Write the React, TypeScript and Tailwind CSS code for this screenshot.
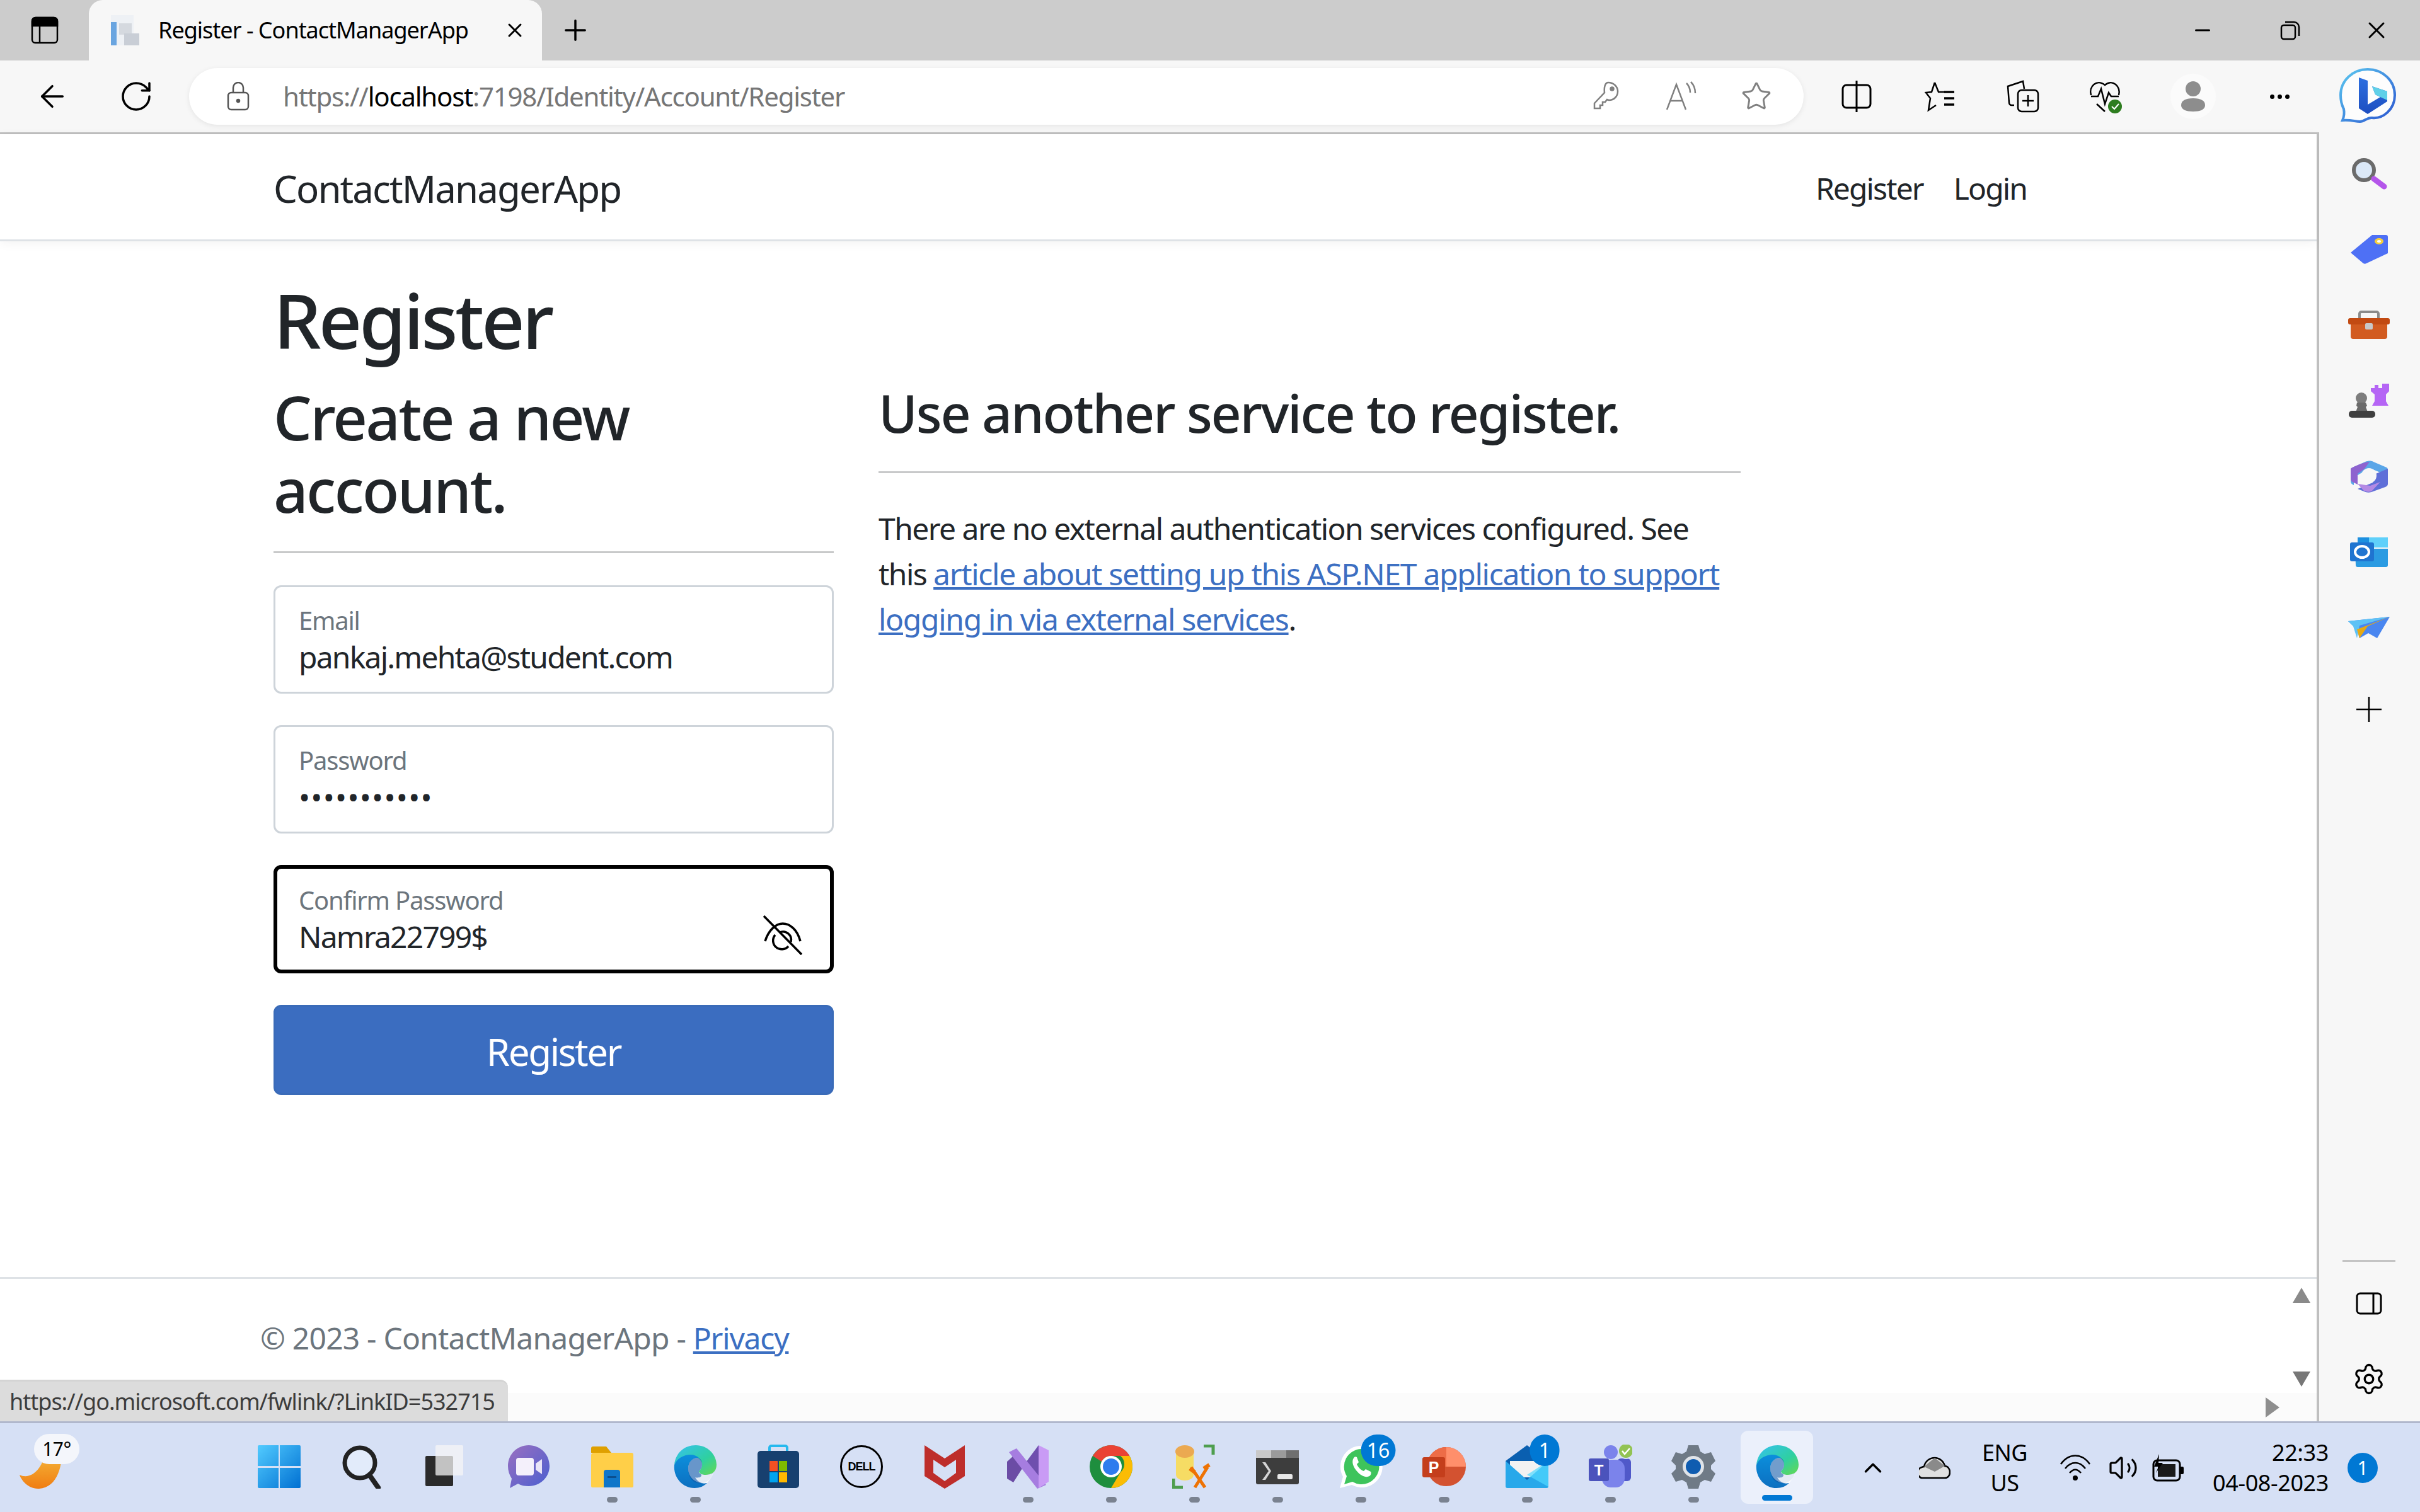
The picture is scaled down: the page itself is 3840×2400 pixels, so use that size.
import React from "react";
import { ArrowLeft, RotateCw, X, Plus, Minus, Star, Settings, ChevronUp, Volume2 } from "lucide-react";

const EdgeLogo = ({ size = 70 }: { size?: number }) => (
  <svg width={size} height={size} viewBox="0 0 70 70">
    <defs>
      <linearGradient id="edgeA" x1="0" y1="0" x2="1" y2="1">
        <stop offset="0" stopColor="#35c1f1" />
        <stop offset="0.6" stopColor="#2fd0a0" />
        <stop offset="1" stopColor="#66d94f" />
      </linearGradient>
      <linearGradient id="edgeB" x1="0" y1="0" x2="0" y2="1">
        <stop offset="0" stopColor="#0c8fdc" />
        <stop offset="1" stopColor="#0c6fc0" />
      </linearGradient>
    </defs>
    <path d="M2 32C4 13 18 1 36 1c19 0 33 15 33 31 0 11-8 16-17 16-6 0-11-2-11-5 0-2 5-4 5-11 0-8-8-14-18-14C16 18 6 23 2 32z" fill="url(#edgeA)" />
    <path d="M2 32c4-10 15-16 26-16 5 0 10 2 13 5-8-1-17 5-17 17 0 14 13 26 30 23-5 5-12 8-20 8C15 69 0 52 2 32z" fill="url(#edgeB)" />
    <path d="M24 38c0-12 9-18 17-17 4 3 5 6 5 11 0 7-5 9-5 11 0 3 5 5 11 5 5 0 9-1 11-3-2 9-8 14-15 16C31 64 24 52 24 38z" fill="#0f5aa6" opacity="0.55" />
    <path d="M41 43c0 3 5 5 11 5 4 0 9-1 12-3-2 6-6 11-10 16-9 2-16-3-19-9 2 1 9 1 10-3 0-3-3-4-4-6z" fill="#ffffff" opacity="0.8" />
  </svg>
);

const WinLogo = () => (
  <svg width="70" height="70" viewBox="0 0 70 70">
    <defs>
      <linearGradient id="winG" x1="0" y1="0" x2="1" y2="1">
        <stop offset="0" stopColor="#52cbff" />
        <stop offset="1" stopColor="#0070d2" />
      </linearGradient>
    </defs>
    <path d="M1 3a2 2 0 012-2h31v33H1zM36 1h31a2 2 0 012 2v31H36zM1 37h33v32H3a2 2 0 01-2-2zM36 37h33v30a2 2 0 01-2 2H36z" fill="url(#winG)" />
  </svg>
);

const SearchGlyph = () => (
  <svg width="70" height="70" viewBox="0 0 70 70" fill="none">
    <circle cx="31" cy="29" r="24" fill="#e2ebfa" stroke="#222" strokeWidth="7" />
    <path d="M46 48l14 20" stroke="#222" strokeWidth="8" strokeLinecap="round" />
  </svg>
);

const TaskView = () => (
  <svg width="70" height="70" viewBox="0 0 70 70">
    <rect x="3" y="18" width="44" height="48" rx="2" fill="#2b2b2b" />
    <rect x="19" y="1" width="44" height="48" rx="2" fill="#f6f6f6" opacity="0.75" />
  </svg>
);

const Meet = () => (
  <svg width="70" height="70" viewBox="0 0 70 70">
    <defs>
      <linearGradient id="meetG" x1="0" y1="0" x2="1" y2="1">
        <stop offset="0" stopColor="#9a6fc0" />
        <stop offset="1" stopColor="#4a5fd0" />
      </linearGradient>
    </defs>
    <path d="M35 1c19 0 33 15 33 33S53 66 35 66c-6 0-12-1-17-4L5 69l3-15C4 48 2 41 2 34 2 16 16 1 35 1z" fill="url(#meetG)" />
    <rect x="15" y="21" width="28" height="28" rx="4" fill="#f4f0fb" />
    <path d="M46 30l10-7v24l-10-7z" fill="#e8e4f7" />
  </svg>
);

const Folder = () => (
  <svg width="70" height="70" viewBox="0 0 70 70">
    <path d="M2 6a3 3 0 013-3h21l8 10H2z" fill="#dfa000" />
    <path d="M2 17a4 4 0 014-4h60a3 3 0 013 3v50a2 2 0 01-2 2H4a2 2 0 01-2-2z" fill="#ffcf48" />
    <path d="M22 44a4 4 0 014-4h18a4 4 0 014 4v24H22z" fill="#0f76c9" />
    <rect x="28" y="50" width="14" height="3" fill="#0a4f8f" />
  </svg>
);

const Store = () => (
  <svg width="70" height="70" viewBox="0 0 70 70">
    <path d="M21 14V5a3 3 0 013-3h22a3 3 0 013 3v9" fill="none" stroke="#25b9ee" strokeWidth="4" />
    <rect x="2" y="10" width="66" height="59" rx="5" fill="#17406f" />
    <rect x="21" y="26" width="13" height="16" fill="#f25022" />
    <rect x="36" y="26" width="13" height="16" fill="#7fba00" />
    <rect x="21" y="44" width="13" height="16" fill="#00a4ef" />
    <rect x="36" y="44" width="13" height="16" fill="#ffb900" />
  </svg>
);

const Dell = () => (
  <svg width="70" height="70" viewBox="0 0 70 70" fill="none">
    <circle cx="35" cy="35" r="32.5" stroke="#000" strokeWidth="3" />
    <text x="35" y="41" textAnchor="middle" fontSize="18" fontWeight="700" fontFamily="Liberation Sans, sans-serif" fill="#000" letterSpacing="-1">DELL</text>
  </svg>
);

const McAfee = () => (
  <svg width="70" height="70" viewBox="0 0 70 70">
    <path d="M3 1l32 21L67 1v49L35 70 3 50z" fill="#be2e2b" />
    <path d="M17 24l18 12 18-12v21L35 58 17 45z" fill="#d6e0f5" />
  </svg>
);

const VisualStudio = () => (
  <svg width="70" height="70" viewBox="0 0 70 70">
    <path d="M2 27l10-9 14 20-14 22-10-6z" fill="#6b4ca5" />
    <path d="M52 1L26 36 52 69z" fill="#6f4fae" />
    <path d="M5 12l12-6 47 58-14 6z" fill="#a67de0" />
    <path d="M52 1l16 8v50l-16 10z" fill="#c99bf5" />
  </svg>
);

const Chrome = () => (
  <svg width="70" height="70" viewBox="0 0 70 70">
    <circle cx="35" cy="35" r="34" fill="#1e8e3e" />
    <path d="M35 1a34 34 0 0129.4 17H35a17 17 0 00-15 9L6 18A34 34 0 0135 1z" fill="#ea4335" />
    <path d="M64.4 18A34 34 0 0135 69l15-25a17 17 0 000-26z" fill="#fbbc04" />
    <circle cx="35" cy="35" r="17" fill="#fff" />
    <circle cx="35" cy="35" r="13" fill="#2f7cee" />
  </svg>
);

const DbTools = () => (
  <svg width="70" height="70" viewBox="0 0 70 70" fill="none">
    <path d="M6 12v36c0 6 8 9 14 9s14-3 14-9V12z" fill="#f6dc64" />
    <ellipse cx="20" cy="11" rx="15" ry="10" fill="#eba951" />
    <path d="M50 2h15v14M2 54v14h15" stroke="#4e9e4e" strokeWidth="5" />
    <path d="M30 36l22 32M56 36L36 68" stroke="#ee7203" strokeWidth="5" />
    <path d="M28 38l8 6M50 38l9-6" stroke="#ee7203" strokeWidth="6" />
  </svg>
);

const TerminalIcon = () => (
  <svg width="70" height="70" viewBox="0 0 70 70">
    <rect x="1" y="9" width="68" height="54" rx="3" fill="#3d3d3d" />
    <rect x="1" y="9" width="24" height="12" fill="#c9c9c9" />
    <rect x="25" y="9" width="24" height="12" fill="#9b9b9b" />
    <rect x="49" y="9" width="20" height="12" fill="#6f6f6f" />
    <path d="M11 28l10 14-10 14 5 0 9-14-9-14z" fill="#d5d5d5" />
    <rect x="35" y="47" width="24" height="8" rx="2" fill="#e8e8e8" />
  </svg>
);

const WhatsApp = () => (
  <svg width="70" height="70" viewBox="0 0 70 70">
    <path d="M36 2a33 33 0 11-15 62L2 69l5-18A33 33 0 0136 2z" fill="#fff" />
    <path d="M36 7a28 28 0 11-14 52L9 63l4-13A28 28 0 0136 7z" fill="#3ec45c" />
    <path d="M25 20c-4 4-4 12 3 21s16 12 21 9c3-2 3-6 2-7l-8-4-3 3c-4-1-10-7-11-11l3-3-3-8c-1-1-3-1-4 0z" fill="#fff" />
  </svg>
);

const PowerPoint = () => (
  <svg width="70" height="70" viewBox="0 0 70 70">
    <circle cx="39" cy="35" r="31" fill="#d35230" />
    <path d="M39 4a31 31 0 0131 31H39z" fill="#ff8f6b" />
    <path d="M39 4v31H8A31 31 0 0139 4z" fill="#ed6c47" />
    <rect x="1" y="20" width="36" height="32" rx="3" fill="#c43e1c" />
    <text x="19" y="45" textAnchor="middle" fontSize="25" fontWeight="700" fontFamily="Liberation Sans, sans-serif" fill="#fff">P</text>
  </svg>
);

const Mail = () => (
  <svg width="70" height="70" viewBox="0 0 70 70">
    <path d="M1 26L35 1l34 25v40H1z" fill="#0a5fb0" />
    <path d="M8 26h54v26H8z" fill="#f2f2f2" />
    <path d="M1 26l34 30 34-30v40a3 3 0 01-3 3H4a3 3 0 01-3-3z" fill="#28a8ea" />
    <path d="M69 26v41L35 48z" fill="#50d9ff" opacity="0.7" />
  </svg>
);

const Teams = () => (
  <svg width="70" height="70" viewBox="0 0 70 70">
    <circle cx="36" cy="12" r="11" fill="#7b83eb" />
    <rect x="46" y="22" width="22" height="36" rx="6" fill="#5059c9" />
    <rect x="22" y="24" width="36" height="44" rx="14" fill="#7b83eb" />
    <rect x="1" y="22" width="32" height="36" rx="3" fill="#4b53bc" />
    <text x="17" y="49" textAnchor="middle" fontSize="24" fontWeight="700" fontFamily="Liberation Sans, sans-serif" fill="#fff">T</text>
    <circle cx="60" cy="10" r="13" fill="#d6e0f5" />
    <circle cx="60" cy="10" r="11" fill="#92c353" />
    <path d="M54 10l4 5 8-9" stroke="#fff" strokeWidth="2.5" fill="none" />
  </svg>
);

const Gear = () => (
  <svg width="70" height="70" viewBox="0 0 70 70">
    <path d="M27 1h16l3 10 7 4 10-3 7 14-7 7v6l7 7-7 13-10-3-7 4-3 10H27l-3-10-7-4-10 3-7-13 7-7v-6l-7-7 7-14 10 3 7-4z" fill="#6f7a86" />
    <circle cx="35" cy="35" r="17" fill="#dfe3e8" />
    <circle cx="35" cy="35" r="12" fill="#0f5cb0" />
  </svg>
);

const taskbarApps: { icon: React.ReactNode; dot: boolean; badge?: string; badgeWidth?: string }[] = [
  { icon: <WinLogo />, dot: false },
  { icon: <SearchGlyph />, dot: false },
  { icon: <TaskView />, dot: false },
  { icon: <Meet />, dot: false },
  { icon: <Folder />, dot: true },
  { icon: <EdgeLogo />, dot: true },
  { icon: <Store />, dot: false },
  { icon: <Dell />, dot: false },
  { icon: <McAfee />, dot: false },
  { icon: <VisualStudio />, dot: true },
  { icon: <Chrome />, dot: true },
  { icon: <DbTools />, dot: true },
  { icon: <TerminalIcon />, dot: true },
  { icon: <WhatsApp />, dot: true, badge: "16", badgeWidth: "w-[55px]" },
  { icon: <PowerPoint />, dot: true },
  { icon: <Mail />, dot: true, badge: "1", badgeWidth: "w-[47px]" },
  { icon: <Teams />, dot: true },
  { icon: <Gear />, dot: true },
];

const TabStrip = () => (
  <div className="flex h-[96px] items-center bg-[#cccccc] text-black">
    <div className="flex w-[141px] justify-center">
      <svg width="44" height="44" viewBox="0 0 44 44" fill="none" stroke="#000" strokeWidth="2.5">
        <rect x="2" y="2" width="40" height="40" rx="5" />
        <path d="M2 8a6 6 0 016-6h28a6 6 0 016 6v7H2z" fill="#000" />
        <path d="M14 15v27" />
      </svg>
    </div>
    <div className="flex h-full w-[719px] items-center rounded-t-[22px] bg-[#f7f7f7] pl-[32px] pr-[25px]">
      <svg width="50" height="50" viewBox="0 0 50 50" className="shrink-0">
        <rect x="3" y="1" width="36" height="48" fill="#eef1f5" />
        <rect x="3" y="12" width="9" height="37" fill="#6aa5e0" />
        <rect x="16" y="14" width="20" height="18" fill="#d5d9df" />
        <rect x="24" y="30" width="24" height="19" fill="#c9ced6" />
      </svg>
      <span className="ml-[28px] text-[36px] leading-none tracking-[-1px] whitespace-nowrap">Register - ContactManagerApp</span>
      <X size={36} strokeWidth={2} className="ml-auto" />
    </div>
    <Plus size={52} strokeWidth={1.6} className="ml-[27px]" />
    <Minus size={36} strokeWidth={2} className="ml-auto mr-[105px]" />
    <svg width="32" height="32" viewBox="0 0 32 32" fill="none" stroke="#000" strokeWidth="2.5" className="mr-[99px]">
      <rect x="2" y="8" width="22" height="22" rx="4" />
      <path d="M8 3h14a8 8 0 018 8v14" />
    </svg>
    <X size={44} strokeWidth={1.6} className="mr-[47px]" />
  </div>
);

const ToolIcon = ({ className, children }: { className?: string; children: React.ReactNode }) => (
  <div className={`flex w-[60px] shrink-0 justify-center ${className ?? ""}`}>{children}</div>
);

const Toolbar = () => (
  <div className="flex h-[114px] items-center bg-[#f7f7f7] text-black">
    <ToolIcon className="ml-[53px]"><ArrowLeft size={56} strokeWidth={1.5} /></ToolIcon>
    <ToolIcon className="ml-[73px]"><RotateCw size={56} strokeWidth={1.5} /></ToolIcon>
    <div className="ml-[54px] flex h-[90px] w-[2562px] shrink-0 items-center rounded-full bg-white pl-[60px] shadow-[0_2px_8px_rgba(0,0,0,0.08)]">
      <svg width="36" height="46" viewBox="0 0 36 46" fill="none" stroke="#555" strokeWidth="2.5" className="shrink-0">
        <rect x="2" y="17" width="32" height="27" rx="5" />
        <path d="M10 17V9a8 8 0 0116 0v8" />
        <circle cx="18" cy="30" r="2" fill="#555" />
      </svg>
      <div className="ml-[53px] text-[42px] leading-none tracking-[-1.25px] whitespace-nowrap text-[#767676]">
        https://<span className="text-black">localhost</span>:7198/Identity/Account/Register
      </div>
      <div className="ml-auto flex items-center pr-[50px]">
        <svg width="44" height="50" viewBox="0 0 44 50" fill="none" stroke="#808080" strokeWidth="2.5">
          <path d="M25 3c8 0 15 6 15 14s-6 14-14 14l-3-1-3 4h-4v5h-4v5H3v-8l16-17c-1-9 1-16 6-16z" />
          <circle cx="31" cy="13" r="2.5" fill="#808080" />
        </svg>
        <svg width="50" height="50" viewBox="0 0 50 50" fill="none" stroke="#808080" strokeWidth="2.5" className="ml-[71px]">
          <path d="M3 46L18 6l15 40M8 32h20" />
          <path d="M34 4c4 4 6 9 6 15M41 2c5 5 7 11 7 18" />
        </svg>
        <Star size={50} strokeWidth={1.4} className="ml-[70px] text-[#808080]" />
      </div>
    </div>
    <div className="ml-[54px] flex w-[60px] justify-center">
      <svg width="48" height="52" viewBox="0 0 48 52" fill="none" stroke="#000" strokeWidth="3">
        <rect x="2" y="8" width="44" height="36" rx="6" />
        <path d="M24 1v50" />
      </svg>
    </div>
    <ToolIcon className="ml-[72px]">
      <svg width="50" height="50" viewBox="0 0 50 50" fill="none" stroke="#000" strokeWidth="2.5">
        <path d="M17 3l6 15 10 0M17 3l-5 15-9 1 7 9-3 19 12-8" />
        <path d="M32 18h16M32 28h16M32 38h16" strokeWidth="3.5" />
      </svg>
    </ToolIcon>
    <ToolIcon className="ml-[72px]">
      <svg width="52" height="52" viewBox="0 0 52 52" fill="none" stroke="#000" strokeWidth="2.5">
        <path d="M12 40H8a4 4 0 01-4-4L2 10l24-8 2 12" />
        <rect x="18" y="16" width="32" height="34" rx="6" />
        <path d="M34 24v18M25 33h18" />
      </svg>
    </ToolIcon>
    <ToolIcon className="ml-[73px]">
      <svg width="56" height="56" viewBox="0 0 56 56" fill="none">
        <path d="M3 26C-1 12 12 0 25 10c12-10 26 2 22 16M3 28h11l5-12 6 24 6-18 4 6h12M12 40l13 12" stroke="#000" strokeWidth="2.5" />
        <circle cx="41" cy="44" r="11" fill="#2e7d1f" />
        <path d="M36 44l4 4 7-8" stroke="#fff" strokeWidth="2" />
      </svg>
    </ToolIcon>
    <ToolIcon className="ml-[77px]">
      <div className="flex h-[72px] w-[72px] shrink-0 items-center justify-center rounded-full bg-[#fbfbfb]">
        <svg width="40" height="48" viewBox="0 0 40 48" fill="#8d8d8d">
          <circle cx="20" cy="12" r="12" />
          <path d="M1 38c0-7 6-11 19-11s19 4 19 11-8 10-19 10S1 45 1 38z" />
        </svg>
      </div>
    </ToolIcon>
    <ToolIcon className="ml-[77px]">
      <div className="flex items-center gap-[5px]">
        <span className="h-[7px] w-[7px] rounded-full bg-black" />
        <span className="h-[7px] w-[7px] rounded-full bg-black" />
        <span className="h-[7px] w-[7px] rounded-full bg-black" />
      </div>
    </ToolIcon>
    <ToolIcon className="ml-[80px]">
      <svg width="92" height="92" viewBox="0 0 92 92" fill="none" className="shrink-0">
        <defs>
          <linearGradient id="bingO" x1="0" y1="0" x2="1" y2="1">
            <stop offset="0" stopColor="#5cc8f0" />
            <stop offset="1" stopColor="#2a55d0" />
          </linearGradient>
          <linearGradient id="bingB" x1="0" y1="0" x2="0" y2="1">
            <stop offset="0" stopColor="#2d6fe0" />
            <stop offset="1" stopColor="#1d4ec0" />
          </linearGradient>
        </defs>
        <path d="M46 3c24 0 43 18 43 41S70 82 53 80c-8-1-12 6-19 6-9 0-13-3-28-2 3-7 3-13 2-18C4 58 3 50 3 44 3 21 22 3 46 3z" fill="#fdfdfd" stroke="url(#bingO)" strokeWidth="4" />
        <path d="M32 16l14 5v38l20-12-8-4-5-13 24 8v16L46 74l-14-9z" fill="url(#bingB)" />
        <path d="M53 30l24 8v14l-11-5-8-4z" fill="#5fd0e8" />
      </svg>
    </ToolIcon>
  </div>
);

const Field = ({ label, value, focused, masked, children }: { label: string; value: string; focused?: boolean; masked?: boolean; children?: React.ReactNode }) => (
  <div
    className={`flex h-[172px] items-start rounded-[12px] bg-white ${
      focused ? "border-[6px] border-black pl-[34px] pr-[44px] pt-[21px]" : "border-[3px] border-[#ced4da] pl-[37px] pr-[40px] pt-[24px]"
    }`}
  >
    <div className="flex-1">
      <div className="text-[40px] leading-[58px] tracking-[-1.2px] text-[#6c757d]">{label}</div>
      <div className={`text-[48px] leading-[58px] text-[#212529] ${masked ? "tracking-[1.3px]" : "tracking-[-1.8px]"}`}>{value}</div>
    </div>
    {children}
  </div>
);

const sidebarIcons: React.ReactNode[] = [
  <svg width="60" height="52" viewBox="0 0 60 52" fill="none">
    <circle cx="22" cy="20" r="16" fill="#dbe8f7" stroke="#6b6b6b" strokeWidth="6" />
    <path d="M38 34l16 12" stroke="#b455ea" strokeWidth="9" strokeLinecap="round" />
  </svg>,
  <svg width="60" height="52" viewBox="0 0 60 52">
    <path d="M1 31L35 3h22a3 3 0 013 3v26L26 48a5 5 0 01-5 0z" fill="#4e70f5" />
    <ellipse cx="46" cy="13" rx="7" ry="5" fill="#f6cf3c" />
    <ellipse cx="46" cy="13" rx="3" ry="2" fill="#fff" />
  </svg>,
  <svg width="66" height="46" viewBox="0 0 66 46" fill="none">
    <path d="M18 12V5a3 3 0 013-3h24a3 3 0 013 3v7" stroke="#8b8b8b" strokeWidth="4" />
    <rect x="4" y="12" width="58" height="33" rx="4" fill="#d25b20" />
    <rect x="0" y="12" width="66" height="10" rx="3" fill="#c24a12" />
    <rect x="27" y="20" width="12" height="10" rx="2" fill="#c8c8c8" />
  </svg>,
  <svg width="66" height="56" viewBox="0 0 66 56">
    <path d="M36 1v7h6V3h6v5h6V1h11v12l-5 5v11l4 7H38l4-7V18l-6-5z" fill="#b565f5" />
    <circle cx="21" cy="24" r="9" fill="#7d7d7d" />
    <path d="M14 31h14l2 5-2 2 3 8H12l3-8-2-2z" fill="#6b6b6b" />
    <rect x="1" y="44" width="42" height="11" rx="5" fill="#3f3f3f" />
  </svg>,
  <svg width="60" height="52" viewBox="0 0 60 52">
    <path d="M2 13L24 3c5-2 10-2 13 0l21 9c2 1 2 3 2 5v8L36 15c-3-1-8-1-12 2L6 28v12c-3-1-5-3-5-6z" fill="#5aa6e8" />
    <path d="M1 14c0-1 18-10 30-11l-8 11-11 8v17L6 36c-3-1-5-3-5-6z" fill="#8e63cf" />
    <path d="M60 14v24c0 3-2 4-4 5L34 51c-4 1-8 1-12-1L12 46l24-10V24z" fill="#5f6fd8" />
    <path d="M12 38l20 3 16-6-14 15c-4 1-8 1-12-1z" fill="#b48ae4" />
    <circle cx="30" cy="25" r="12" fill="#f7f7f7" />
  </svg>,
  <svg width="60" height="50" viewBox="0 0 60 50">
    <path d="M12 2h46a2 2 0 012 2v14H12z" fill="#1d90e0" />
    <rect x="30" y="2" width="30" height="16" fill="#5fd0fa" />
    <path d="M8 20h52v26a3 3 0 01-3 3H12a3 3 0 01-3-3z" fill="#2b9be2" />
    <rect x="0" y="10" width="38" height="30" rx="3" fill="#1f74d0" />
    <ellipse cx="19" cy="25" rx="11" ry="9" fill="none" stroke="#fff" strokeWidth="4" />
  </svg>,
  <svg width="66" height="36" viewBox="0 0 66 36">
    <path d="M0 8L66 1 46 35l-14-8-14 8-4-14z" fill="#4a86f0" />
    <path d="M0 8l66-7-48 14-4 20-6-19z" fill="#5fc2f5" />
    <path d="M14 21L66 1 31 16l-13 19z" fill="#e7a912" />
  </svg>,
];

const Sidebar = () => (
  <div className="flex w-[160px] shrink-0 flex-col items-center bg-[#f7f7f7] pr-[3px] pt-[6px] text-black">
    {sidebarIcons.map((icon, i) => (
      <div key={i} className="flex h-[120px] w-full items-center justify-center">
        {icon}
      </div>
    ))}
    <svg width="46" height="46" viewBox="0 0 46 46" stroke="#000" strokeWidth="2.5" className="mt-[47px]">
      <path d="M23 3v40M3 23h40" />
    </svg>
    <div className="mt-auto h-[3px] w-[84px] bg-[#c4c4c4]" />
    <svg width="42" height="36" viewBox="0 0 42 36" fill="none" stroke="#000" strokeWidth="3" className="mt-[48px]">
      <rect x="2" y="2" width="38" height="32" rx="5" />
      <path d="M28 2v32" />
    </svg>
    <Settings size={54} strokeWidth={1.5} className="mb-[40px] mt-[75px]" />
  </div>
);

const Taskbar = () => (
  <div className="flex h-[144px] shrink-0 border-t-[3px] border-[#b0b7cc] bg-[#d6e0f5] text-black">
    <div className="relative h-full w-[377px] shrink-0">
      <svg width="70" height="72" viewBox="0 0 70 72" className="absolute left-[30px] top-[34px]">
        <defs>
          <linearGradient id="sunG" x1="0" y1="0" x2="0" y2="1">
            <stop offset="0" stopColor="#f6c342" />
            <stop offset="1" stopColor="#f07d12" />
          </linearGradient>
        </defs>
        <path d="M68 2c2 30-6 66-36 68C14 71 3 55 1 48c18 9 40-10 42-46z" fill="url(#sunG)" />
      </svg>
      <div className="absolute left-[54px] top-[17px] flex h-[48px] w-[72px] items-center justify-center rounded-full bg-[#f4f6fb] text-[30px] leading-none tracking-[-0.5px]">
        17°
      </div>
    </div>
    {taskbarApps.map((app, i) => (
      <div key={i} className="relative flex w-[132px] shrink-0 flex-col items-center pt-[34px]">
        {app.icon}
        {app.dot && <span className="mt-[13px] h-[9px] w-[17px] rounded-full bg-[#7a8290]" />}
        {app.badge && (
          <span className={`absolute left-[94px] top-[18px] flex h-[50px] -translate-x-1/2 items-center justify-center rounded-full bg-[#0078d4] text-[32px] leading-none text-white ${app.badgeWidth}`}>
            {app.badge}
          </span>
        )}
      </div>
    ))}
    <div className="relative ml-[9px] mt-[12px] flex h-[116px] w-[115px] shrink-0 flex-col items-center rounded-[12px] bg-[#ebf0fb] pt-[22px]">
      <EdgeLogo />
      <span className="mt-[10px] h-[9px] w-[48px] rounded-full bg-[#0078d4]" />
    </div>
    <div className="flex flex-1 items-center">
      <ChevronUp size={46} strokeWidth={1.8} className="ml-[72px]" />
      <svg width="50" height="36" viewBox="0 0 50 36" className="ml-[50px]">
        <path d="M4 34a9 9 0 01-2-16c2-1 4-2 6-2C10 7 17 2 25 2c7 0 14 5 16 13 5 0 8 5 8 10 0 5-3 9-8 9z" fill="#e0e0e0" stroke="#000" strokeWidth="2.5" />
        <path d="M8 16l17-14 16 13-16 9z" fill="#8a8a8a" />
      </svg>
      <div className="ml-[46px] flex w-[80px] flex-col items-center text-[36px] leading-[48px] tracking-[-0.6px]">
        <span>ENG</span>
        <span>US</span>
      </div>
      <svg width="50" height="44" viewBox="0 0 50 44" fill="none" stroke="#000" strokeWidth="2.5" className="ml-[47px]">
        <path d="M2 16c13-18 33-18 46 0M9 23c9-12 23-12 32 0M16 30c6-7 12-7 18 0" />
        <circle cx="25" cy="38" r="4" fill="#000" stroke="none" />
      </svg>
      <Volume2 size={48} strokeWidth={1.6} className="ml-[27px]" />
      <svg width="52" height="44" viewBox="0 0 52 44" className="ml-[21px]">
        <rect x="3" y="10" width="42" height="32" rx="6" fill="none" stroke="#000" strokeWidth="3" />
        <rect x="10" y="16" width="28" height="20" fill="#1a1a1a" />
        <rect x="45" y="20" width="6" height="12" rx="2" />
        <path d="M12 0L4 20h7L7 30 18 14h-7z" />
      </svg>
      <div className="ml-[37px] flex w-[192px] flex-col items-end whitespace-nowrap text-[36px] leading-[48px] tracking-[-0.4px]">
        <span>22:33</span>
        <span>04-08-2023</span>
      </div>
      <span className="ml-[30px] flex h-[48px] w-[48px] items-center justify-center rounded-full bg-[#0078d4] text-[30px] leading-none text-white">1</span>
    </div>
  </div>
);

export default function App() {
  return (
    <div className="relative flex h-[2400px] w-[3840px] flex-col overflow-hidden bg-white font-['Noto_Sans',sans-serif] text-[#212529]">
      <TabStrip />
      <Toolbar />
      <div className="flex min-h-0 flex-1">
        <div className="flex min-w-0 flex-1 flex-col border-r-[4px] border-t-[3px] border-[#bfbfbf]">
          <nav className="flex h-[170px] shrink-0 items-center justify-between border-b-[3px] border-[#dee2e6] pl-[434px] pr-[460px] pt-[4px] shadow-[0_3px_16px_rgba(0,0,0,0.05)]">
            <span className="text-[60px] leading-none tracking-[-1.9px]">ContactManagerApp</span>
            <div className="flex gap-[48px] text-[48px] leading-none tracking-[-1.9px]">
              <span>Register</span>
              <span>Login</span>
            </div>
          </nav>
          <main className="flex-1 pl-[434px] pt-[53px]">
            <h1 className="mb-[24px] text-[120px] font-medium leading-[144px] tracking-[-4.3px]">Register</h1>
            <div className="flex gap-[71px]">
              <section className="w-[889px] shrink-0">
                <h2 className="text-[96px] font-medium leading-[115px] tracking-[-2.8px]">Create a new account.</h2>
                <hr className="mb-[51px] mt-[41px] border-t-[3px] border-[#c8c9ca]" />
                <div className="flex flex-col gap-[50px]">
                  <Field label="Email" value="pankaj.mehta@student.com" />
                  <Field label="Password" value="•••••••••••" masked />
                  <Field label="Confirm Password" value="Namra22799$" focused>
                    <svg width="62" height="63" viewBox="0 0 62 63" fill="none" stroke="#000" strokeWidth="3.5" className="mt-[53px] shrink-0">
                      <path d="M1 1l60 61" />
                      <path d="M3 41C9 22 21 13 31 13c11 0 23 9 28 28" />
                      <path d="M19 31a13 13 0 0021 18M26 27a13 13 0 0118 15" />
                    </svg>
                  </Field>
                  <button className="h-[143px] rounded-[12px] border-[3px] border-[#3a6bb8] bg-[#3b6dc0] pt-[4px] text-[60px] leading-none tracking-[-2.4px] text-white">
                    Register
                  </button>
                </div>
              </section>
              <section className="w-[1368px] shrink-0">
                <h3 className="text-[84px] font-medium leading-[101px] tracking-[-2.2px]">Use another service to register.</h3>
                <hr className="mb-[52px] mt-[43px] border-t-[3px] border-[#c8c9ca]" />
                <p className="text-[48px] leading-[72px] tracking-[-1.55px]">
                  There are no external authentication services configured. See this{" "}
                  <span className="tracking-[-1.3px] text-[#3c6fc2] underline">article about setting up this ASP.NET application to support logging in via external services</span>.
                </p>
              </section>
            </div>
          </main>
          <footer className="flex h-[229px] shrink-0 flex-col border-t-[3px] border-[#dee2e6]">
            <div className="flex min-h-0 flex-1">
              <div className="flex-1 pl-[413px] pt-[58px] text-[48px] leading-[72px] tracking-[-0.8px] text-[#6c757d]">
                © 2023 - ContactManagerApp - <span className="tracking-[-1.2px] text-[#3c6fc2] underline">Privacy</span>
              </div>
              <div className="flex w-[48px] flex-col items-center justify-between pb-[10px] pt-[14px]">
                <span className="h-0 w-0 border-x-[14px] border-b-[24px] border-x-transparent border-b-[#8a8a8a]" />
                <span className="h-0 w-0 border-x-[14px] border-t-[24px] border-x-transparent border-t-[#777777]" />
              </div>
            </div>
            <div className="flex h-[45px] shrink-0 items-center justify-end bg-[#fbfbfb] pr-[59px]">
              <span className="h-0 w-0 border-y-[16px] border-l-[22px] border-y-transparent border-l-[#8e8e8e]" />
            </div>
          </footer>
        </div>
        <Sidebar />
      </div>
      <Taskbar />
      <div className="absolute left-0 top-[2190px] flex h-[66px] w-[806px] items-center rounded-tr-[12px] border-t-[3px] border-[#d4d4d4] bg-[#dcdcdc] pl-[15px] text-[36px] leading-none tracking-[-1px] whitespace-nowrap text-[#3c3c3c]">
        https://go.microsoft.com/fwlink/?LinkID=532715
      </div>
    </div>
  );
}
